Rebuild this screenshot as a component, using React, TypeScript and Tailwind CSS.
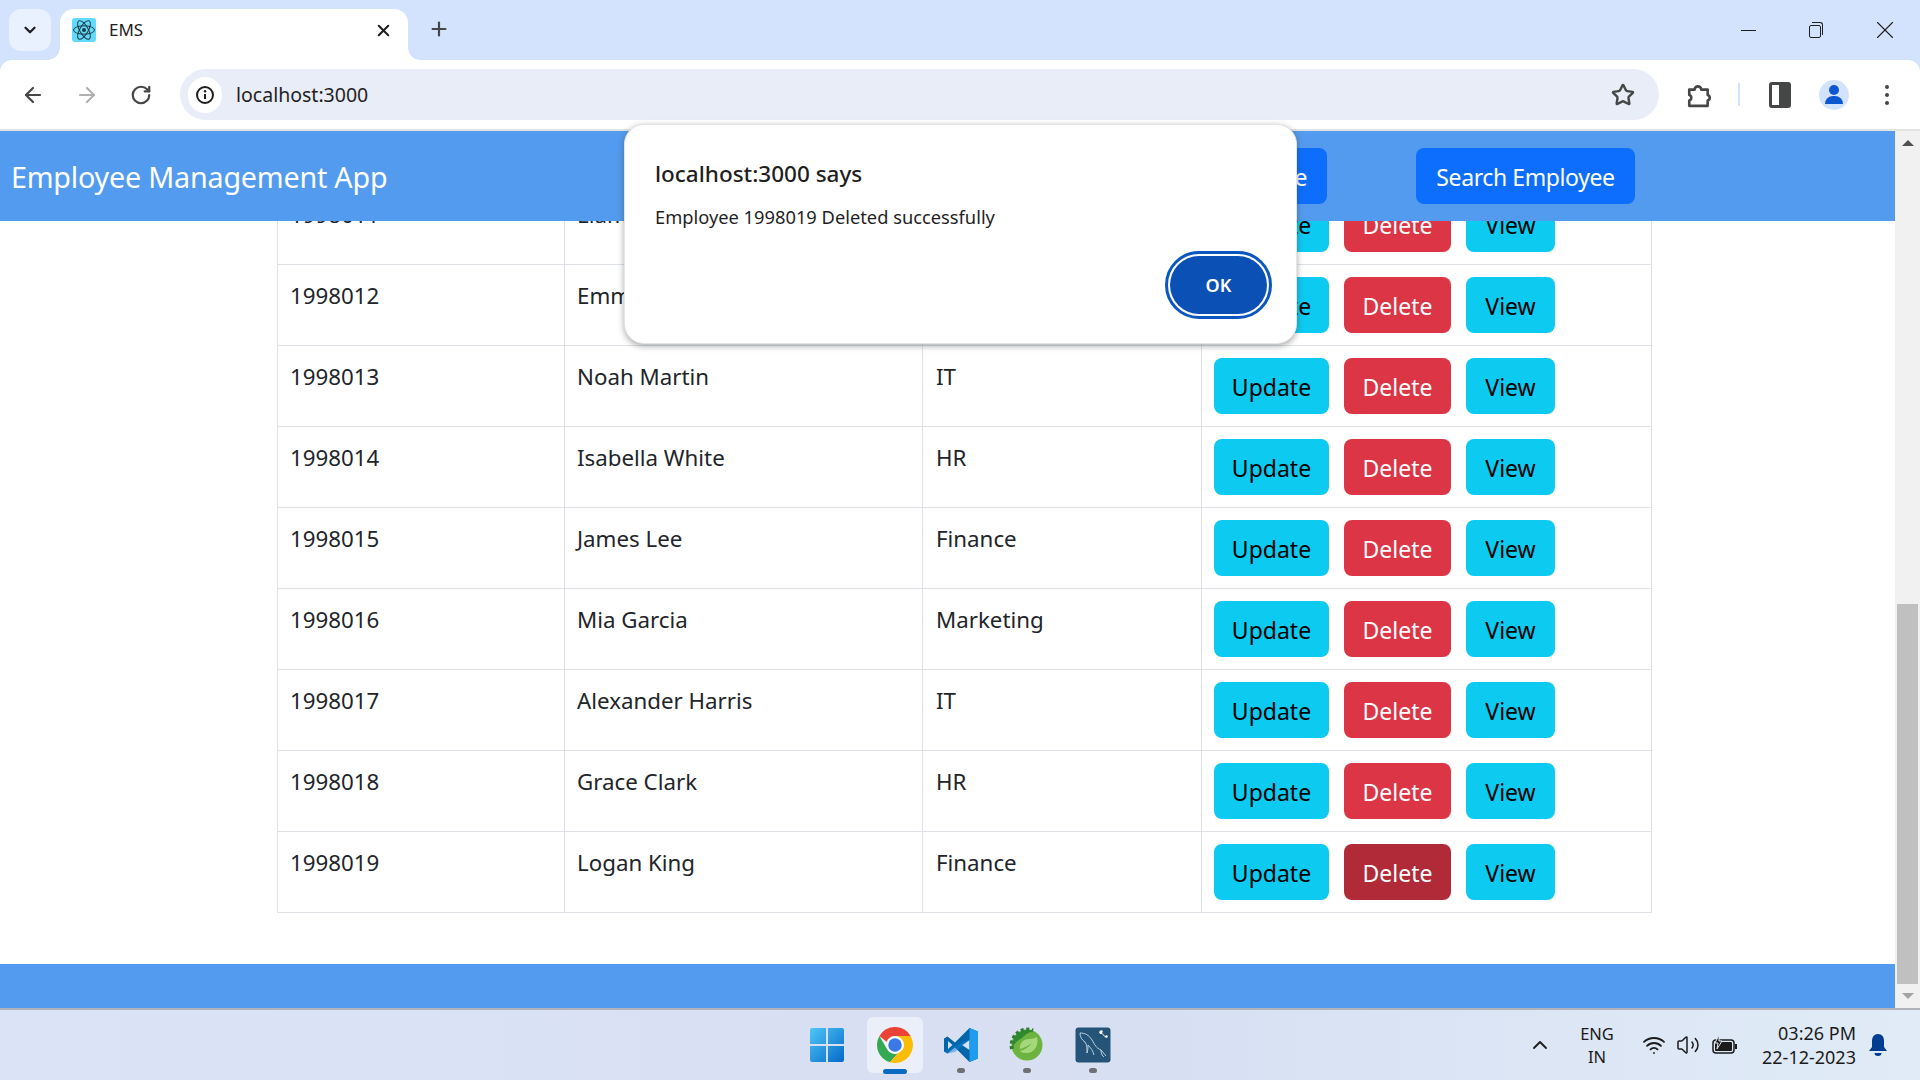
import { ArrowLeft, ArrowRight, ChevronDown, ChevronUp, Plus, RotateCw, Star, Volume2, Wifi, X } from "lucide-react";

const rows = [
  { id: "1998011", name: "Liam Thomas", dept: "Sales", dark: false },
  { id: "1998012", name: "Emma Lewis", dept: "Marketing", dark: false },
  { id: "1998013", name: "Noah Martin", dept: "IT", dark: false },
  { id: "1998014", name: "Isabella White", dept: "HR", dark: false },
  { id: "1998015", name: "James Lee", dept: "Finance", dark: false },
  { id: "1998016", name: "Mia Garcia", dept: "Marketing", dark: false },
  { id: "1998017", name: "Alexander Harris", dept: "IT", dark: false },
  { id: "1998018", name: "Grace Clark", dept: "HR", dark: false },
  { id: "1998019", name: "Logan King", dept: "Finance", dark: true },
];

const ReactIcon = () => (
  <svg viewBox="0 0 24 24" className="w-[24px] h-[24px] rounded-[3px] bg-[#61dafb]" fill="none" stroke="#1f3a44" strokeWidth="1">
    <ellipse cx="12" cy="12" rx="10.5" ry="4.2" />
    <ellipse cx="12" cy="12" rx="10.5" ry="4.2" transform="rotate(60 12 12)" />
    <ellipse cx="12" cy="12" rx="10.5" ry="4.2" transform="rotate(120 12 12)" />
    <circle cx="12" cy="12" r="2" fill="#1f3a44" stroke="none" />
  </svg>
);

const WindowsLogo = () => (
  <svg viewBox="0 0 36 36" className="w-[36px] h-[36px]">
    <defs>
      <linearGradient id="win" x1="0" y1="0" x2="1" y2="1">
        <stop offset="0" stopColor="#4fc6f8" />
        <stop offset="1" stopColor="#0569c7" />
      </linearGradient>
    </defs>
    <path fill="url(#win)" d="M1 3a2 2 0 0 1 2-2h14v16H1zM19 1h14a2 2 0 0 1 2 2v14H19zM1 19h16v16H3a2 2 0 0 1-2-2zM19 19h16v14a2 2 0 0 1-2 2H19z" />
  </svg>
);

const ChromeLogo = () => (
  <svg viewBox="0 0 48 48" className="w-[36px] h-[36px]">
    <path fill="#ea4335" d="M3.2 12A24 24 0 0 1 44.8 12H24a12 12 0 0 0-11.2 7.8z" />
    <path fill="#34a853" d="M3.2 12 13.6 30a12 12 0 0 0 14 5.4L17.2 47A24 24 0 0 1 3.2 12z" />
    <path fill="#fbbc04" d="M44.8 12A24 24 0 0 1 17.2 47L27.6 35.4 34.4 30A12 12 0 0 0 34.4 18 12 12 0 0 0 24 12z" />
    <circle cx="24" cy="24" r="11.5" fill="#fff" />
    <circle cx="24" cy="24" r="9" fill="#3b78e7" />
  </svg>
);

const VsCodeLogo = () => (
  <svg viewBox="0 0 36 36" className="w-[36px] h-[36px]">
    <path fill="#0065a9" d="M26.5 1 12 15.5 4.5 9.6 1 11.4v13.2l3.5 1.8 7.5-5.9L26.5 35l8.5-3.5V4.5zM5 14l4.5 4L5 22zm21.5-1v10l-7.5-5z" />
    <path fill="#1f9cf0" d="M26.5 1 35 4.5v27L26.5 35z" />
    <path fill="#0a7fd0" d="M26.5 1v12L12 25 4.5 26.4 1 24.6l25.5-13z" opacity="0.45" />
  </svg>
);

const SpringLogo = () => (
  <svg viewBox="0 0 36 36" className="w-[36px] h-[36px]">
    <circle cx="18" cy="18" r="15.5" fill="#6db33f" />
    <path fill="none" stroke="#2f7d2c" strokeWidth="4" strokeDasharray="3 2.4" d="M3 22A16 16 0 0 1 24 3.5" />
    <path fill="#2f8a2f" d="M3.5 20A15.5 15.5 0 0 1 25 4a20 20 0 0 0-12 7 22 22 0 0 0-9.5 9z" />
    <path fill="#a5d87a" d="M28 10c2 8-2 16-11 16-3 0-5-1-6-2 4-1 9-4 12-8-4 3-8 5-12 6-1-5 3-10 9-10 3 0 6-1 8-2z" />
  </svg>
);

const MySqlLogo = () => (
  <svg viewBox="0 0 36 36" className="w-[36px] h-[36px]">
    <rect x="0.5" y="0.5" width="35" height="35" rx="3" fill="#245477" />
    <path fill="none" stroke="#c9dbe6" strokeWidth="0.9" d="M5 6c5 0 9 2 12 7s4 8 9 10l5 6M5 6c0 4 2 7 5 9 2 3 2 6 2 11 1-3 1-6 1-8 3 3 5 6 6 10M26 23c0 3 1 6 3 7" />
    <path fill="#fff" d="m26 3 2 1-1 2 3 3 2-1 1 2-2 1-1-1-3-3-2 0-1-2z" />
  </svg>
);

const Battery = () => (
  <svg viewBox="0 0 26 20" className="w-[26px] h-[20px]" fill="none">
    <rect x="1" y="5" width="21" height="13" rx="3" stroke="#1b1b1b" strokeWidth="1.5" />
    <rect x="3" y="7" width="17" height="9" rx="1" fill="#1b1b1b" />
    <path fill="#1b1b1b" d="M23 9h2v5h-2z" />
    <path fill="#1b1b1b" stroke="#e0ebf7" strokeWidth="1" d="M7 0 3 8h3l-1 6 5-8H7z" />
  </svg>
);

const Bell = () => (
  <svg viewBox="0 0 20 24" className="w-[20px] h-[24px]" fill="#003e92">
    <path d="M10 1C6 1 4 4 4 8v6l-3 4h18l-3-4V8c0-4-2-7-6-7z" />
    <path d="M6.5 20h7a3.5 3 0 0 1-7 0z" />
  </svg>
);

const App = () => {
  return (
    <div className="relative w-[1920px] h-[1080px] overflow-hidden flex flex-col bg-[#d3e3fd] font-['Noto_Sans',sans-serif] text-[#1f1f1f]">
      {/* tab strip */}
      <div className="h-[60px] shrink-0 flex items-end">
        <div className="ml-[9px] mb-[9px] w-[42px] h-[42px] rounded-[12px] bg-[#e9f0fe] flex items-center justify-center">
          <ChevronDown size={18} strokeWidth={3} />
        </div>
        <div className="relative ml-[9px] w-[348px] h-[51px] bg-white rounded-t-[14px] flex items-center pl-[12px] pr-[15px] pb-[9px]">
          <span className="absolute left-[-12px] bottom-0 w-[12px] h-[12px] bg-[radial-gradient(circle_at_0_0,transparent_11.5px,white_12px)]" />
          <span className="absolute right-[-12px] bottom-0 w-[12px] h-[12px] bg-[radial-gradient(circle_at_100%_0,transparent_11.5px,white_12px)]" />
          <ReactIcon />
          <span className="ml-[13px] text-[17px]">EMS</span>
          <X size={19} strokeWidth={2.6} className="ml-auto" />
        </div>
        <div className="ml-[20px] mb-[20px]">
          <Plus size={22} strokeWidth={2.4} className="text-[#444746]" />
        </div>
        <div className="ml-auto h-[60px] flex items-center">
          <div className="w-[15px] border-t-[1.5px] border-[#1f1f1f]" />
          <div className="relative ml-[53px] w-[14px] h-[16px]">
            <div className="absolute left-0 bottom-0 w-[12px] h-[13px] border border-[#1f1f1f] rounded-[2px]" />
            <div className="absolute right-0 top-0 w-[11px] h-[13px] border-t border-r border-[#1f1f1f] rounded-tr-[3px]" />
          </div>
          <X size={30} strokeWidth={0.9} className="ml-[47px] mr-[20px]" />
        </div>
      </div>

      {/* toolbar */}
      <div className="h-[71px] shrink-0 bg-white rounded-t-[12px] border-b-2 border-[#e3e3e3] flex items-center relative z-0">
        <ArrowLeft size={24} strokeWidth={2.2} className="ml-[21px] text-[#444746]" />
        <ArrowRight size={24} strokeWidth={2.2} className="ml-[30px] text-[#b0b1b1]" />
        <RotateCw size={22} strokeWidth={2.4} className="ml-[31px] text-[#444746]" />
        <div className="ml-[28px] w-[1479px] h-[51px] bg-[#e9edf7] rounded-full flex items-center pl-[8px]">
          <div className="w-[34px] h-[36px] rounded-full bg-white flex items-center justify-center">
            <svg viewBox="0 0 20 20" className="w-[20px] h-[20px]" fill="none">
              <circle cx="10" cy="10" r="8" stroke="#1f1f1f" strokeWidth="2" />
              <path d="M10 9v5" stroke="#1f1f1f" strokeWidth="2" />
              <circle cx="10" cy="6.3" r="1.2" fill="#1f1f1f" />
            </svg>
          </div>
          <span className="ml-[14px] text-[19.5px]">localhost:3000</span>
          <Star size={24} strokeWidth={2.4} className="ml-auto mr-[24px] text-[#444746]" />
        </div>
        <svg viewBox="0 0 24 24" className="ml-[27px] w-[26px] h-[28px]" fill="none" stroke="#444746" strokeWidth="2.4">
          <path d="M3 7h5a3 3 0 0 1 6 0h6v5a2.6 2.6 0 0 1 0 5v5H3v-5a2.6 2.6 0 0 0 0-5z" strokeLinejoin="round" />
        </svg>
        <div className="ml-[26px] w-[2px] h-[23px] bg-[#d3e3fd]" />
        <div className="ml-[29px] w-[22px] h-[26px] rounded-[3px] border-[3px] border-[#444746] flex justify-end">
          <div className="w-[9px] bg-[#444746]" />
        </div>
        <div className="ml-[28px] w-[30px] h-[30px] rounded-full bg-[#d3e3fd] flex flex-col items-center justify-center overflow-hidden">
          <div className="w-[10px] h-[10px] rounded-full bg-[#0b57d0]" />
          <div className="mt-[1px] w-[18px] h-[8px] rounded-t-[8px] bg-[#0b57d0]" />
        </div>
        <div className="ml-[36px] flex flex-col gap-[4px]">
          <div className="w-[4px] h-[4px] rounded-full bg-[#444746]" />
          <div className="w-[4px] h-[4px] rounded-full bg-[#444746]" />
          <div className="w-[4px] h-[4px] rounded-full bg-[#444746]" />
        </div>
      </div>

      {/* page */}
      <div className="flex-1 min-h-0 flex bg-white">
        <div className="w-[1895px] flex flex-col overflow-hidden">
          <header className="relative z-10 h-[90px] shrink-0 bg-[#539bee] flex items-center pl-[11px] text-white">
            <span className="mt-[2px] text-[28.7px] tracking-[-0.2px]">Employee Management App</span>
            <button className="ml-auto h-[56px] px-[20px] pt-[2px] whitespace-nowrap rounded-[8px] bg-[#0d6efd] text-[23px] tracking-[-0.4px]">Add Employee</button>
            <button className="ml-[89px] mr-[260px] h-[56px] w-[219px] pt-[2px] rounded-[8px] bg-[#0d6efd] text-[23px] tracking-[-0.4px]">Search Employee</button>
          </header>
          <div className="flex-1 min-h-0 -mt-[38px] pl-[277px]">
            <table className="w-[1374px] table-fixed border-collapse text-[22.3px] text-[#212529]">
              <colgroup>
                <col className="w-[287px]" />
                <col className="w-[358px]" />
                <col className="w-[279px]" />
                <col className="w-[450px]" />
              </colgroup>
              <tbody>
                {rows.map((row) => (
                  <tr key={row.id} className="h-[81px]">
                    <td className="border border-[#dee2e6] px-[12px] pt-[14px] align-top">{row.id}</td>
                    <td className="border border-[#dee2e6] px-[12px] pt-[14px] align-top">{row.name}</td>
                    <td className="border border-[#dee2e6] px-[13px] pt-[14px] align-top">{row.dept}</td>
                    <td className="border border-[#dee2e6] px-[12px] align-middle">
                      <div className="flex gap-[15px] text-[23px]">
                        <button className="h-[56px] w-[115px] pt-[2px] rounded-[8px] bg-[#0dcaf0] text-black">Update</button>
                        <button className={`h-[56px] w-[107px] pt-[2px] rounded-[8px] text-white ${row.dark ? "bg-[#b02a37]" : "bg-[#dc3545]"}`}>Delete</button>
                        <button className="h-[56px] w-[89px] pt-[2px] rounded-[8px] bg-[#0dcaf0] text-black">View</button>
                      </div>
                    </td>
                  </tr>
                ))}
              </tbody>
            </table>
          </div>
          <footer className="h-[44px] shrink-0 bg-[#539bee]" />
        </div>
        {/* scrollbar */}
        <div className="w-[25px] bg-[#f1f1f1] flex flex-col items-center pb-[9px]">
          <div className="mt-[9px] w-0 h-0 border-x-[6px] border-x-transparent border-b-[6px] border-b-[#505050]" />
          <div className="mt-auto w-[21px] h-[380px] bg-[#c0c0c0]" />
          <div className="mt-[9px] w-0 h-0 border-x-[6px] border-x-transparent border-t-[6px] border-t-[#a3a3a3]" />
        </div>
      </div>

      {/* taskbar */}
      <div className="h-[72px] shrink-0 border-t-2 border-[#b0b3bb] bg-[linear-gradient(90deg,#dbe4f7_0%,#d8dff2_45%,#d7e0f2_60%,#e0ebf7_100%)] flex items-center">
        <div className="ml-[809px]">
          <WindowsLogo />
        </div>
        <div className="relative ml-[22px] w-[56px] h-[56px] rounded-[6px] bg-[#ebeff9] flex items-center justify-center">
          <ChromeLogo />
          <div className="absolute bottom-[-1px] left-[16px] w-[24px] h-[5px] rounded-full bg-[#0a6cc0]" />
        </div>
        <div className="relative ml-[20px]">
          <VsCodeLogo />
          <div className="absolute bottom-[-10px] left-[14px] w-[8px] h-[5px] rounded-full bg-[#6e7075]" />
        </div>
        <div className="relative ml-[30px]">
          <SpringLogo />
          <div className="absolute bottom-[-10px] left-[14px] w-[8px] h-[5px] rounded-full bg-[#6e7075]" />
        </div>
        <div className="relative ml-[30px]">
          <MySqlLogo />
          <div className="absolute bottom-[-10px] left-[14px] w-[8px] h-[5px] rounded-full bg-[#6e7075]" />
        </div>
        <ChevronUp size={24} strokeWidth={1.8} className="ml-[417px] text-[#1b1b1b]" />
        <div className="ml-[24px] w-[42px] flex flex-col items-center text-[16.5px] leading-[23px] text-[#1b1b1b]">
          <span>ENG</span>
          <span>IN</span>
        </div>
        <Wifi size={24} strokeWidth={1.8} className="ml-[24px] text-[#1b1b1b]" />
        <Volume2 size={24} strokeWidth={1.5} className="ml-[10px] text-[#1b1b1b]" />
        <div className="ml-[12px]">
          <Battery />
        </div>
        <div className="ml-[24px] flex flex-col items-end text-[18px] leading-[24px] text-[#1b1b1b]">
          <span>03:26 PM</span>
          <span>22-12-2023</span>
        </div>
        <div className="ml-[12px]">
          <Bell />
        </div>
      </div>

      {/* alert dialog */}
      <div className="absolute left-[624px] top-[124px] z-20 w-[673px] h-[220px] rounded-[20px] bg-white border border-[#e4e4e4] shadow-[0_2px_6px_rgba(60,64,67,0.45)] pl-[30px] pr-[24px] pt-[34px] flex flex-col">
        <div className="text-[22.5px] font-medium leading-[30px] text-[#1f1f1f]">localhost:3000 says</div>
        <div className="mt-[16px] text-[18.3px] leading-[24px] text-[#1f1f1f]">Employee 1998019 Deleted successfully</div>
        <div className="mt-auto mb-[24px] self-end w-[107px] h-[68px] rounded-full border-[3px] border-[#0b57c0] p-[2px]">
          <button className="w-full h-full rounded-full bg-[#0b50b4] text-white text-[18px] font-semibold">OK</button>
        </div>
      </div>
    </div>
  );
};

export default App;
